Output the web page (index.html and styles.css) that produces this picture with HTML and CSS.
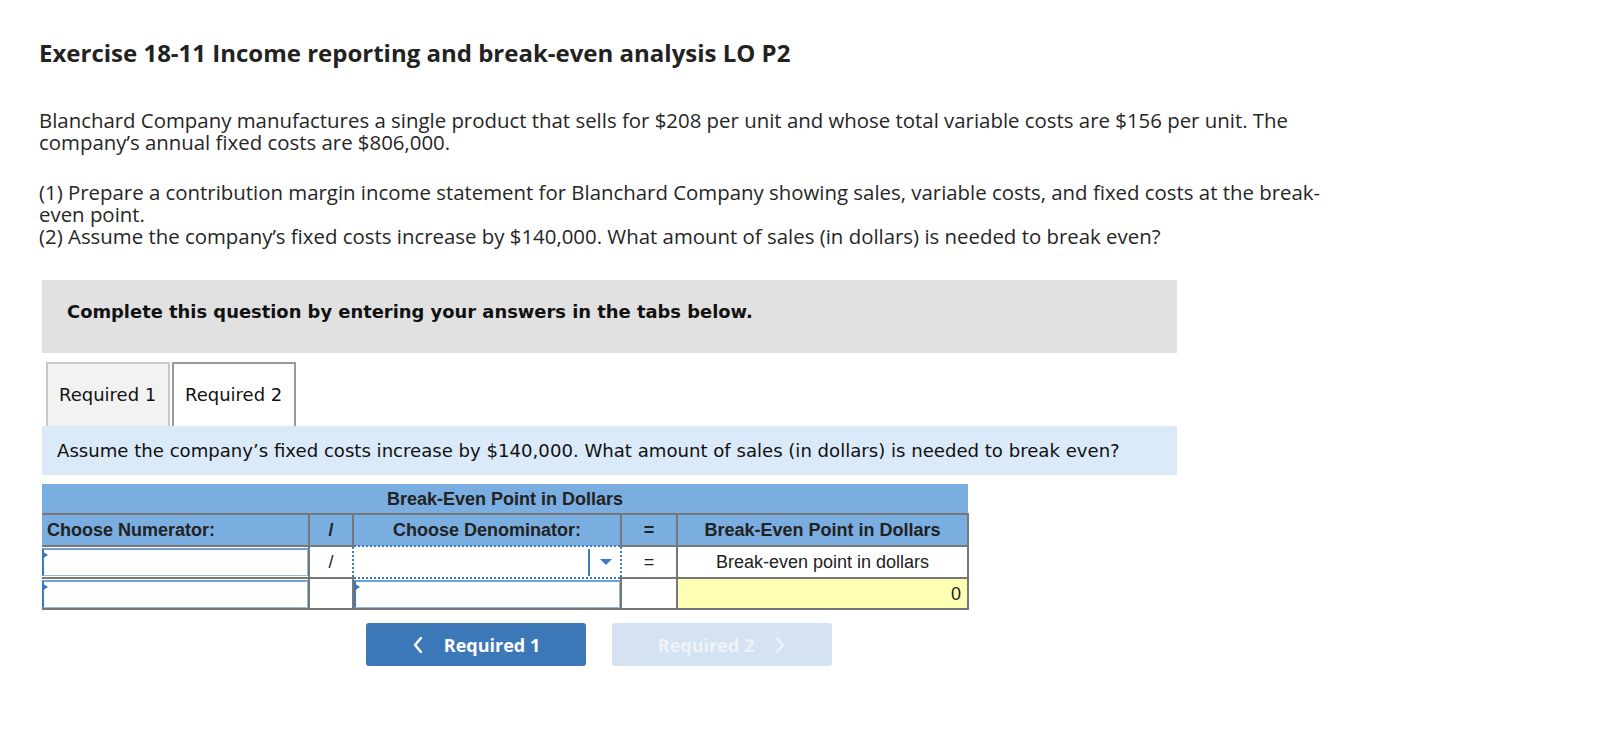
FILE: index.html
```html
<!DOCTYPE html>
<html>
<head>
<meta charset="utf-8">
<title>Exercise 18-11</title>
<link rel="stylesheet" href="styles.css">
</head>
<body>
<div class="page">
  <h1 class="title">Exercise 18-11 Income reporting and break-even analysis LO P2</h1>
  <p class="intro">Blanchard Company manufactures a single product that sells for $208 per unit and whose total variable costs are $156 per unit. The<br>company’s annual fixed costs are $806,000.</p>
  <p class="intro intro-2">(1) Prepare a contribution margin income statement for Blanchard Company showing sales, variable costs, and fixed costs at the break-<br>even point.<br>(2) Assume the company’s fixed costs increase by $140,000. What amount of sales (in dollars) is needed to break even?</p>

  <div class="panel">
    <div class="notice">Complete this question by entering your answers in the tabs below.</div>

    <div class="tabs">
      <div class="tab tab-inactive">Required 1</div>
      <div class="tab tab-active">Required 2</div>
    </div>

    <div class="prompt">Assume the company’s fixed costs increase by $140,000. What amount of sales (in dollars) is needed to break even?</div>

    <table class="grid">
      <colgroup>
        <col class="c1"><col class="c2"><col class="c3"><col class="c4"><col class="c5">
      </colgroup>
      <tr class="r1">
        <th colspan="5" class="caption-cell">Break-Even Point in Dollars</th>
      </tr>
      <tr class="r2">
        <th class="left first">Choose Numerator:</th>
        <th>/</th>
        <th class="no-bottom">Choose Denominator:</th>
        <th>=</th>
        <th>Break-Even Point in Dollars</th>
      </tr>
      <tr class="r3">
        <td class="field first"><div class="inp"></div></td>
        <td class="op no-right">/</td>
        <td class="select-cell"><div class="sel"><span class="sel-sep"></span><span class="sel-arrow"></span></div></td>
        <td class="op no-left">=</td>
        <td class="label">Break-even point in dollars</td>
      </tr>
      <tr class="r4">
        <td class="field first"><div class="inp"></div></td>
        <td class="op"></td>
        <td class="field no-top"><div class="inp"></div></td>
        <td class="op"></td>
        <td class="result">0</td>
      </tr>
    </table>

    <div class="nav">
      <button class="btn btn-prev" type="button">
        <svg class="chev" width="12" height="18" viewBox="0 0 12 18"><polyline points="9,2 3,9 9,16" fill="none" stroke="#ffffff" stroke-width="2.4" stroke-linecap="round" stroke-linejoin="round"/></svg>
        <span>Required 1</span>
      </button>
      <button class="btn btn-next" type="button">
        <span>Required 2</span>
        <svg class="chev" width="12" height="18" viewBox="0 0 12 18"><polyline points="3,2 9,9 3,16" fill="none" stroke="#eef3fa" stroke-width="2.4" stroke-linecap="round" stroke-linejoin="round"/></svg>
      </button>
    </div>
  </div>
</div>
</body>
</html>
```
FILE: styles.css
```css
* { box-sizing: border-box; }

html, body {
  margin: 0;
  padding: 0;
  background: #ffffff;
}

.page {
  padding: 38px 0 0 39px;
  color: #222222;
}

.title {
  margin: 0;
  font-family: "Open Sans", "Liberation Sans", sans-serif;
  font-weight: 700;
  font-size: 24px;
  line-height: 30px;
  color: #222222;
}

.intro {
  margin: 41px 0 0 0;
  font-family: "Open Sans", "Liberation Sans", sans-serif;
  font-size: 20.4px;
  line-height: 22px;
  white-space: nowrap;
  color: #262626;
}

.intro-2 {
  margin-top: 28px;
}

.panel {
  margin: 33px 0 0 3px;
  width: 1135px;
}

.notice {
  background: #e1e1e1;
  height: 73px;
  padding: 21px 0 0 25px;
  font-family: "DejaVu Sans", Verdana, sans-serif;
  font-weight: 700;
  font-size: 17.9px;
  line-height: 22px;
  color: #111111;
}

.tabs {
  display: flex;
  gap: 2px;
  margin: 9px 0 0 4px;
}

.tab {
  width: 124px;
  height: 64px;
  padding: 20px 0 0 11px;
  font-family: "DejaVu Sans", Verdana, sans-serif;
  font-size: 18px;
  line-height: 22px;
  color: #111111;
  border-style: solid;
  border-width: 2px 2px 0 2px;
}

.tab-inactive {
  background: #f2f2f2;
  border-color: #c9c9c9;
}

.tab-active {
  background: #ffffff;
  border-color: #9a9a9a;
}

.prompt {
  background: #dbeaf9;
  height: 49px;
  padding: 14px 0 0 15px;
  font-family: "DejaVu Sans", Verdana, sans-serif;
  font-size: 18.1px;
  line-height: 22px;
  color: #111111;
}

.grid {
  margin-top: 9px;
  width: 926px;
  table-layout: fixed;
  border-collapse: collapse;
  font-family: "Liberation Sans", Arial, sans-serif;
  font-size: 18px;
  color: #222222;
}

.c1 { width: 267px; }
.c2 { width: 44px; }
.c3 { width: 268px; }
.c4 { width: 56px; }
.c5 { width: 291px; }

.grid th,
.grid td {
  border: 2px solid #777777;
  padding: 0;
  text-align: center;
  vertical-align: middle;
}

.grid th {
  background: #7aade0;
  font-weight: 700;
  line-height: 20px;
}

.grid .first {
  border-left: none;
}

.r1 th {
  border-top: none;
  border-left: none;
  border-right: none;
  height: 30px;
  padding-top: 0;
}

.r2 th { height: 32px; }
.r3 td { height: 32px; }
.r4 td { height: 31px; }

.grid th.left {
  text-align: left;
  padding-left: 5px;
}

.grid td.op {
  background: #ffffff;
  line-height: 20px;
}

.grid td.label {
  background: #ffffff;
  line-height: 20px;
  padding-bottom: 1px;
}

.grid td.result {
  background: #ffffb4;
  text-align: right;
  padding-right: 6px;
  line-height: 20px;
}

.grid .no-right { border-right: none; }
.grid .no-left { border-left: none; }
.grid .no-bottom { border-bottom: none; }
.grid .no-top { border-top: none; }

.grid td.field {
  background: #ffffff;
  padding: 0;
}

.inp {
  position: relative;
  height: 28px;
  background: #ffffff;
  border: 1px solid #8db6e4;
  border-left: 2px solid #3b78c0;
  border-top: 2px solid #6d9fd9;
}

.inp::before {
  content: "";
  position: absolute;
  left: -2px;
  top: 1px;
  width: 0;
  height: 0;
  border-left: 6px solid #3b78c0;
  border-top: 4px solid transparent;
  border-bottom: 4px solid transparent;
}

.grid td.select-cell {
  border: 2px dotted #3d7bc4;
  background: #ffffff;
  padding: 0;
}

.sel {
  display: flex;
  align-items: center;
  justify-content: flex-end;
  height: 28px;
}

.sel-sep {
  width: 2px;
  height: 27px;
  background: #3d7bc4;
}

.sel-arrow {
  width: 0;
  height: 0;
  margin: 0 8px 0 10px;
  border-top: 6px solid #3d7bc4;
  border-left: 6px solid transparent;
  border-right: 6px solid transparent;
}

.nav {
  display: flex;
  gap: 26px;
  margin: 13px 0 0 324px;
}

.btn {
  display: flex;
  align-items: center;
  justify-content: center;
  gap: 20px;
  width: 220px;
  height: 43px;
  border: none;
  border-radius: 3px;
  font-family: "Open Sans", "Liberation Sans", sans-serif;
  font-weight: 700;
  font-size: 18px;
  line-height: 22px;
  padding: 0;
  cursor: pointer;
}

.btn-prev {
  background: #3c78b8;
  color: #ffffff;
}

.btn-next {
  background: #d5e2f1;
  color: #eef3fa;
}

.chev {
  display: block;
}
```
